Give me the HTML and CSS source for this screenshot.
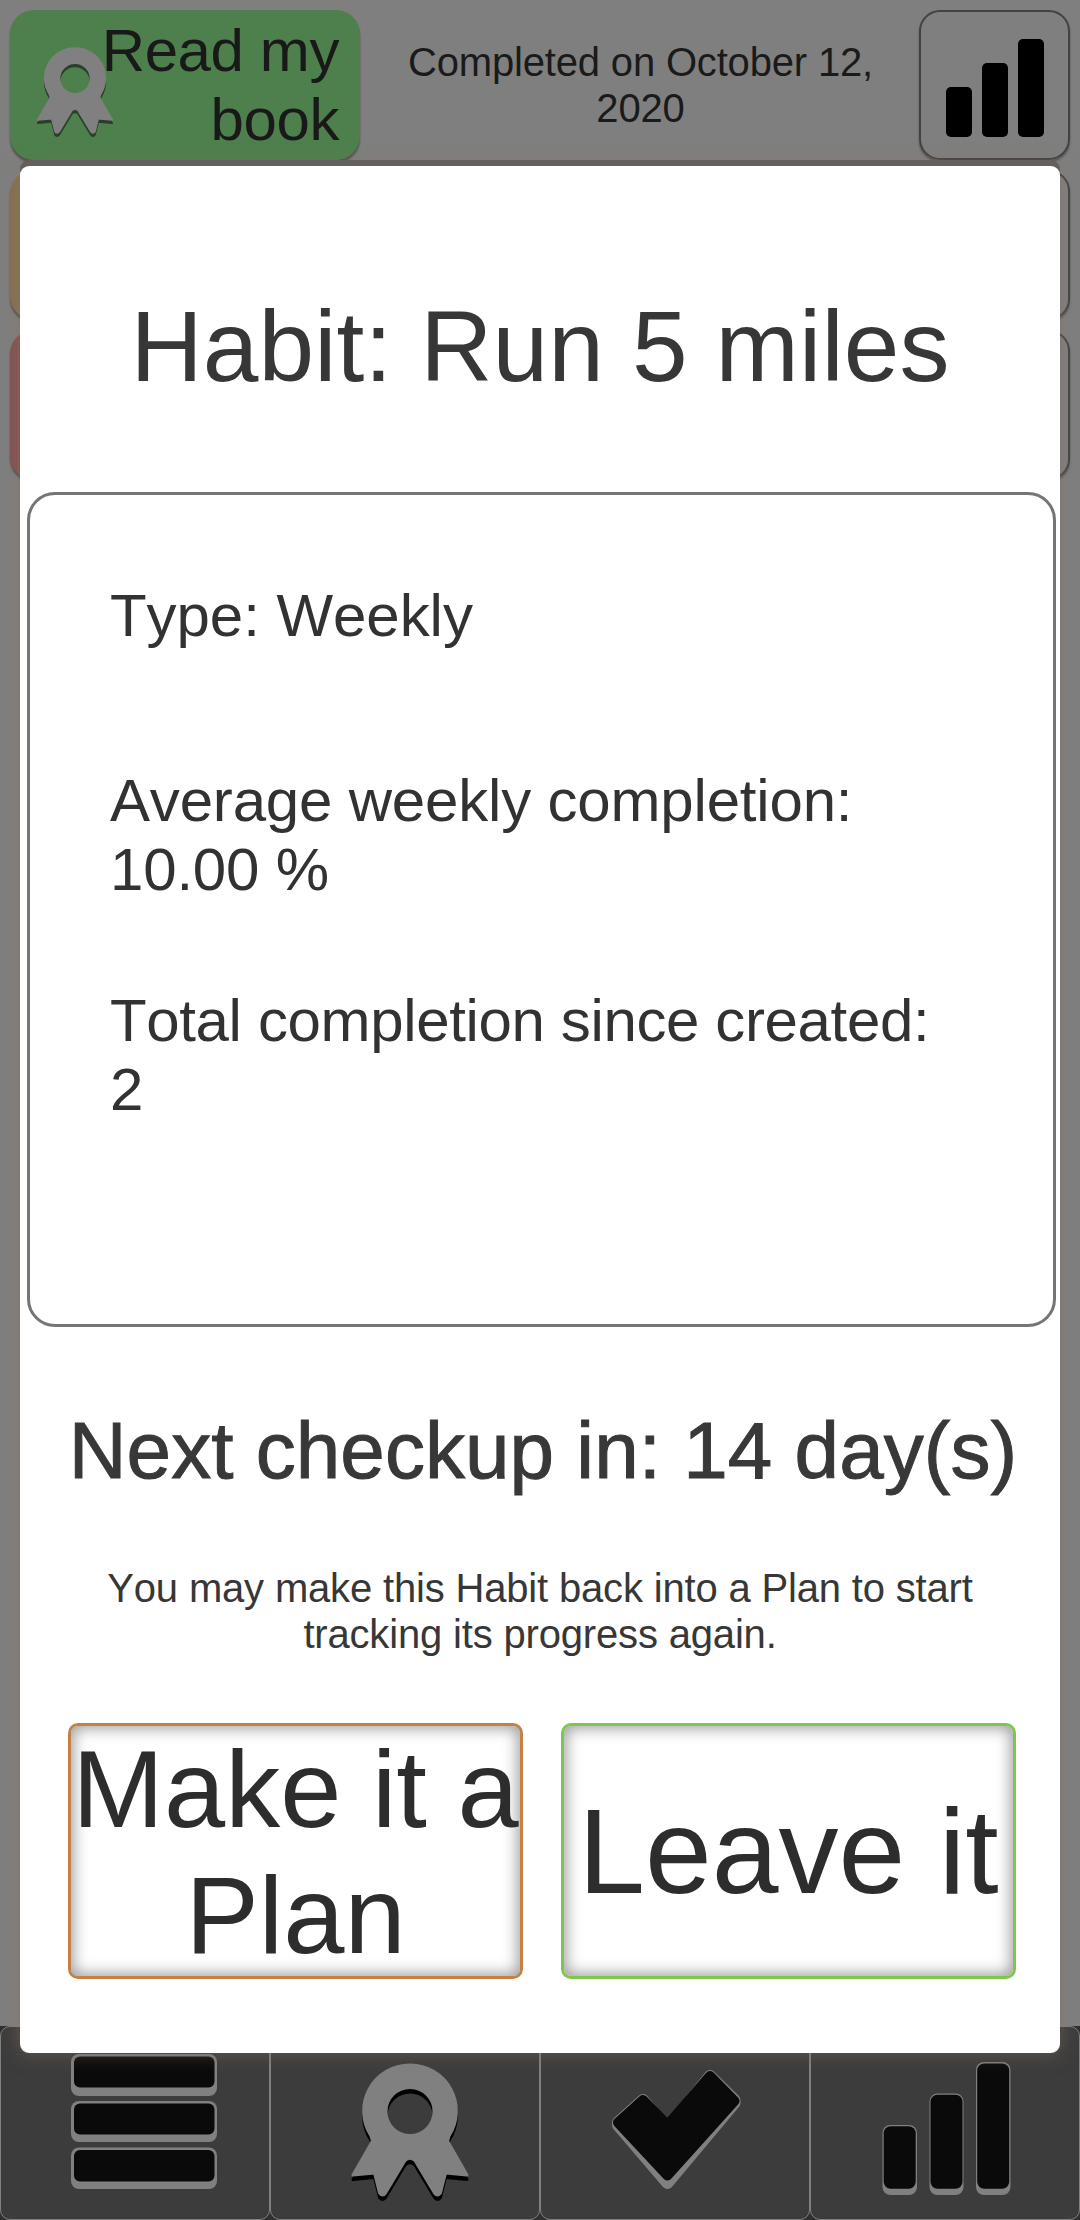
FILE: index.html
```html
<!DOCTYPE html>
<html lang="en">
<head>
<meta charset="utf-8">
<title>Habit</title>
<link rel="stylesheet" href="styles.css">
</head>
<body>
<svg class="defs" aria-hidden="true">
  <symbol id="medal" viewBox="0 0 120 140">
    <path fill-rule="evenodd" stroke-linejoin="round" stroke-width="3" d="M60 2A46 46 0 0 1 99 73L97.500 78L117 112L95.500 110L90.500 130Q87 134 84.500 130L65 97.500Q60 93 55 97.500L35.500 130Q33 134 29.500 130L24.500 110L3 112L22.500 78L21 73A46 46 0 0 1 60 2ZM60 24.500A24 24 0 1 0 60 72.500A24 24 0 1 0 60 24.500Z"/>
  </symbol>
</svg>
<div class="screen">
  <main class="list">
    <div class="row">
      <div class="plan plan-green">
        <svg class="plan-medal" viewBox="0 0 120 140"><use class="medal-shade-green" href="#medal" y="5" width="120" height="140"/><use class="medal-face" href="#medal" width="120" height="140"/></svg>
        <span class="plan-name">Read my<br>book</span>
      </div>
      <p class="status">Completed on October 12,<br>2020</p>
      <div class="stats">
        <svg class="stats-icon" viewBox="0 0 98 98"><rect y="48" width="26" height="50" rx="5"/><rect x="36" y="24" width="26" height="74" rx="5"/><rect x="72" width="26" height="98" rx="5"/></svg>
      </div>
    </div>
    <div class="row"><div class="plan plan-orange"></div><div class="stats"></div></div>
    <div class="row"><div class="plan plan-red"></div><div class="stats"></div></div>
  </main>
  <nav class="tabs">
    <div class="tab">
      <svg class="tab-icon" viewBox="0 0 270 194">
        <g fill="#808080"><rect x="71" y="28" width="146" height="42" rx="8"/><rect x="71" y="75" width="146" height="41" rx="8"/><rect x="71" y="121.500" width="146" height="41.500" rx="8"/></g>
        <g fill="#0a0a0a"><rect x="74" y="30.500" width="140.500" height="31" rx="6"/><rect x="74" y="77.500" width="140.500" height="31" rx="6"/><rect x="74" y="124" width="140.500" height="31.500" rx="6"/></g>
      </svg>
    </div>
    <div class="tab">
      <svg class="tab-icon" viewBox="0 0 270 194">
        <use class="medal-shade" href="#medal" x="80" y="41.500" width="120" height="140"/>
        <use class="medal-face" href="#medal" x="80" y="37" width="120" height="140"/>
      </svg>
    </div>
    <div class="tab">
      <svg class="tab-icon" viewBox="0 0 270 194">
        <g stroke-linejoin="round"><path fill="#808080" stroke="#808080" stroke-width="12" d="M78 96.500L103 74L127.500 103L170 50L194.500 74V77L127.500 157L78 99Z"/><path fill="#0a0a0a" stroke="#0a0a0a" stroke-width="10" d="M78 96.500L103 74L127.500 99L170 50L194.500 75L127.500 149.500Z"/></g>
      </svg>
    </div>
    <div class="tab">
      <svg class="tab-icon" viewBox="0 0 270 194">
        <g fill="#808080"><rect x="72.500" y="99" width="34.500" height="70" rx="8"/><rect x="119.500" y="67.500" width="34" height="101.500" rx="8"/><rect x="166" y="36" width="34.500" height="133" rx="8"/></g>
        <g fill="#0a0a0a"><rect x="73.700" y="100.200" width="32" height="62.500" rx="7"/><rect x="120.500" y="68.700" width="32" height="94" rx="7"/><rect x="167.200" y="37.500" width="32" height="125.200" rx="7"/></g>
      </svg>
    </div>
  </nav>
  <section class="dialog">
    <h1 class="title">Habit: Run 5 miles</h1>
    <div class="details">
      <p class="type">Type: Weekly</p>
      <p class="average">Average weekly completion:<br>10.00 %</p>
      <p class="total">Total completion since created:<br>2</p>
    </div>
    <h2 class="checkup">Next checkup in: 14 day(s)</h2>
    <p class="note">You may make this Habit back into a Plan to start<br>tracking its progress again.</p>
    <div class="actions">
      <button class="action action-plan">Make it a<br>Plan</button>
      <button class="action action-leave">Leave it</button>
    </div>
  </section>
</div>
</body>
</html>
```
FILE: styles.css
```css
* { box-sizing: border-box; }
body { margin: 0; font-family: "Liberation Sans", Arial, sans-serif; font-kerning: none; color: #323232; }
h1, h2, p { margin: 0; font-weight: 400; }
.defs { display: block; width: 0; height: 0; }

.screen { position: relative; width: 1080px; height: 2220px; overflow: hidden; background: #7f7f7f; display: flex; flex-direction: column; justify-content: space-between; }

.list { padding: 10px; display: flex; flex-direction: column; gap: 10px; }
.row { height: 150px; display: flex; justify-content: space-between; }
.plan { width: 350px; border-radius: 24px; display: flex; box-shadow: 0 3px 2px #55504d; }
.plan-green { background: #4d804d; justify-content: space-between; padding: 6px 21px 0 26px; }
.plan-orange { background: #857150; }
.plan-red { background: #855150; }
.plan-medal { flex: none; width: 78px; height: 91px; margin-top: 31px; }
.plan-name { color: #191919; font-size: 60px; line-height: 69px; letter-spacing: -.4px; text-align: right; white-space: nowrap; margin-left: -40px; }
.status { width: 559px; padding: 29px 0 0 2px; font-size: 40px; line-height: 46px; letter-spacing: -.17px; text-align: center; color: #1a1a1a; }
.stats { width: 151px; border: 2px solid #424242; border-radius: 21px; box-shadow: 0 2px 2px #55504d; padding: 27px 0 0 25px; }
.stats-icon { display: block; width: 98px; height: 98px; }

.medal-face { fill: #808080; stroke: #808080; }
.medal-shade { fill: #000; stroke: #000; }
.medal-shade-green { fill: #27402a; stroke: #27402a; }

.tabs { height: 194px; display: grid; grid-template-columns: repeat(4, 1fr); background: #303030; }
.tab { border: 1px solid #808080; border-radius: 10px; background: #3c3c3c; }
.tab-icon { display: block; width: 270px; height: 194px; margin: -1px; }

.dialog { position: absolute; left: 20px; top: 166px; width: 1040px; height: 1887px; padding-top: 123px; border-radius: 9px; background: #fff; box-shadow: 0 -6px 0 #665f5b, 0 0 20px rgba(138, 116, 100, .55); }
.title { font-size: 100px; line-height: 115px; letter-spacing: .12px; text-align: center; color: #373737; }
.details { height: 835px; margin: 88px 4px 0 7px; padding: 86px 0 0 80px; border: 3px solid #757575; border-radius: 28px; font-size: 60px; line-height: 69px; }
.type { letter-spacing: -.05px; }
.average { margin-top: 116px; letter-spacing: -.18px; }
.total { margin-top: 82px; letter-spacing: -.36px; }
.checkup { margin-top: 78px; padding-left: 6px; font-size: 80px; line-height: 92px; letter-spacing: .05px; text-align: center; color: #383838; -webkit-text-stroke: 1px #383838; }
.note { margin-top: 68px; font-size: 40px; line-height: 46px; letter-spacing: -.17px; text-align: center; color: #373737; }
.actions { display: flex; gap: 38px; margin: 66px 44px 0 48px; }
.action { width: 455px; height: 256px; padding: 0; border: 3px solid; border-radius: 10px; background: #fff; box-shadow: inset 0 0 15px 2px #999; font-family: inherit; color: #2d2d2d; white-space: nowrap; }
.action-plan { border-color: #c58145; font-size: 110px; line-height: 126px; }
.action-leave { border-color: #7fc64e; font-size: 120px; line-height: 138px; }
```
